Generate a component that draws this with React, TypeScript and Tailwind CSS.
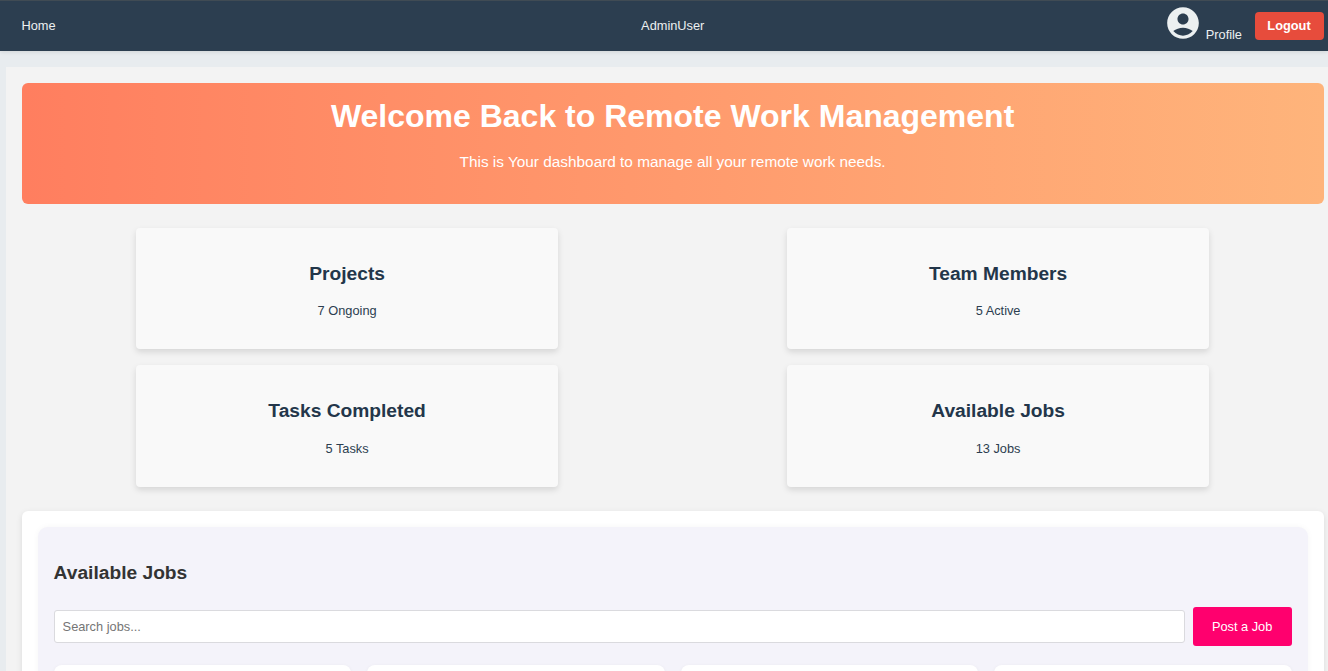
const stats = [
  { title: "Projects", value: "7 Ongoing" },
  { title: "Team Members", value: "5 Active" },
  { title: "Tasks Completed", value: "5 Tasks" },
  { title: "Available Jobs", value: "13 Jobs" },
];

function AccountIcon() {
  return (
    <svg viewBox="0 0 24 24" className="block size-[38px] shrink-0 fill-[#ecf0f1]" aria-hidden="true">
      <path d="M12 2C6.48 2 2 6.48 2 12s4.48 10 10 10 10-4.48 10-10S17.52 2 12 2zm0 4c1.93 0 3.5 1.57 3.5 3.5S13.93 13 12 13s-3.5-1.57-3.5-3.5S10.07 6 12 6zm0 14c-2.03 0-4.43-.82-6.14-2.88C7.55 15.8 9.68 15 12 15s4.45.8 6.14 2.12C16.43 19.18 14.03 20 12 20z" />
    </svg>
  );
}

function NavBar() {
  return (
    <nav className="relative grid h-[51px] grid-cols-[1fr_auto_1fr] items-center border-t border-[#404b54] bg-[#2c3e50] pr-1 pl-[21.5px] text-[12.8px] leading-4 text-[#ecf0f1] shadow-[0_1px_4px_rgba(0,0,0,0.1)]">
      <a>Home</a>
      <span>AdminUser</span>
      <div className="flex items-start self-start justify-self-end pt-[3px]">
        <a className="flex items-start">
          <AccountIcon />
          <span className="mt-[23px] ml-[3.8px]">Profile</span>
        </a>
        <button className="mt-2 ml-[13px] h-7 w-[69px] rounded bg-[#e74c3c] pr-px text-[12.8px] font-bold text-white">
          Logout
        </button>
      </div>
    </nav>
  );
}

export default function App() {
  return (
    <div className="h-[671px] overflow-hidden bg-[#e8ecef] font-['Liberation_Sans',Arial,sans-serif]">
      <NavBar />
      <main className="mt-4 ml-[5.6px] bg-[#f3f3f3] pt-4 pr-[4.4px] pl-4">
        <header className="h-[121px] rounded-md bg-linear-to-r from-[#ff7e5f] to-[#feb47b] pt-[14px] text-center text-white">
          <h1 className="text-[32px] leading-[38px] font-bold">Welcome Back to Remote Work Management</h1>
          <p className="mt-[17px] text-[15.36px] leading-5">This is Your dashboard to manage all your remote work needs.</p>
        </header>

        <section className="mt-6 grid grid-cols-2 gap-y-4">
          {stats.map((s) => (
            <div
              key={s.title}
              className="h-[121.4px] w-[422px] justify-self-center rounded bg-[#f9f9f9] pt-[34.6px] text-center text-[#2c3e50] shadow-[0_3px_6px_rgba(0,0,0,0.12)]"
            >
              <h3 className="text-[19.2px] leading-[22px] font-bold text-[#23364a]">{s.title}</h3>
              <p className="mt-[18.7px] text-[12.8px] leading-[15px]">{s.value}</p>
            </div>
          ))}
        </section>

        <section className="mt-[24.2px] rounded-md bg-white p-4 shadow-[0_2px_6px_rgba(0,0,0,0.1)]">
          <div className="h-[400px] rounded-[9.6px] bg-[#f4f3fa] px-4 pt-[35px] shadow-[0_0_6px_rgba(0,0,0,0.04)]">
            <h2 className="text-[19.2px] leading-[22px] font-bold text-[#333]">Available Jobs</h2>
            <div className="mt-[23px] flex items-center gap-2">
              <input
                type="text"
                placeholder="Search jobs..."
                className="h-[33px] min-w-0 flex-1 rounded-[3px] border border-[#dadade] bg-white px-2 text-[12.8px] placeholder:text-[#757575]"
              />
              <button className="h-[39px] w-[99px] rounded-[3px] bg-[#ff006e] text-[12.8px] text-white">Post a Job</button>
            </div>
            <div className="mt-[19px] grid grid-cols-4 gap-4">
              {[0, 1, 2, 3].map((i) => (
                <div key={i} className="h-40 rounded-lg bg-white shadow-[0_1px_4px_rgba(0,0,0,0.05)]" />
              ))}
            </div>
          </div>
        </section>
      </main>
    </div>
  );
}
